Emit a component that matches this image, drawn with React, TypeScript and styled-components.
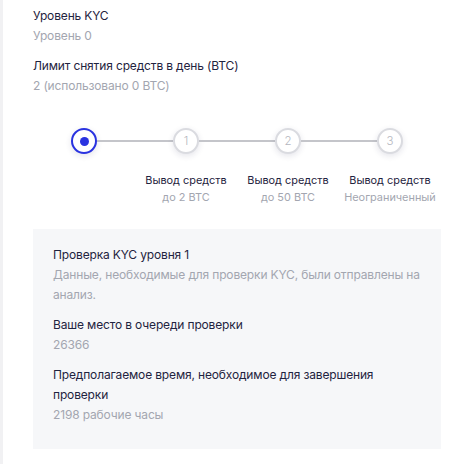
import React from "react";
import styled, { createGlobalStyle } from "styled-components";

const Global = createGlobalStyle`
  html, body { margin: 0; padding: 0; background: #ffffff; }
  body { font-family: Inter, "Open Sans", "Noto Sans", sans-serif; -webkit-font-smoothing: antialiased; }
`;

const Page = styled.div`
  width: 464px;
  height: 464px;
  box-sizing: border-box;
  border-left: 3px solid #f1f1f3;
  padding: 6px 23px 0 30px;
  overflow: hidden;
`;

const Section = styled.div`
  margin-bottom: 10px;
  &:last-child { margin-bottom: 0; }
`;

const Title = styled.div`
  font-size: 12px;
  line-height: 20px;
  letter-spacing: -0.15px;
  color: #1f2340;
`;

const Muted = styled.div`
  font-size: 12px;
  line-height: 20px;
  letter-spacing: -0.15px;
  color: #a3a6b0;
`;

const Stepper = styled.div`
  padding-top: 22px;
  width: 408px;
`;

const Track = styled.div`
  display: flex;
  align-items: center;
  padding: 0 38px;
  height: 26px;
`;

const Circle = styled.div<{ $active?: boolean }>`
  flex: none;
  width: 26px;
  height: 26px;
  box-sizing: border-box;
  border-radius: 50%;
  background: #fff;
  border: ${(p) => (p.$active ? "2.5px solid #2a33e0" : "2px solid #dadbe0")};
  box-shadow: 0 2px 6px rgba(30, 35, 80, 0.12);
  display: flex;
  align-items: center;
  justify-content: center;
  font-size: 11.5px;
  font-weight: 300;
  color: #b4b6be;
`;

const Dot = styled.div`
  width: 9px;
  height: 9px;
  border-radius: 50%;
  background: #2a33e0;
`;

const Line = styled.div`
  flex: 1;
  height: 2px;
  background: #c4c5ca;
`;

const Labels = styled.div`
  display: grid;
  grid-template-columns: repeat(4, 102px);
  margin-top: 18px;
`;

const Label = styled.div`
  text-align: center;
  font-size: 10.9px;
  line-height: 16.5px;
  color: #1f2340;
  white-space: nowrap;
`;

const LabelSub = styled.div`
  color: #a3a6b0;
`;

const Box = styled.div`
  margin-top: 24px;
  width: 408px;
  box-sizing: border-box;
  background: #f6f7f9;
  padding: 16px 12px 24px 20px;
`;

const steps = [
  { n: "1", sub: "до 2 BTC" },
  { n: "2", sub: "до 50 BTC" },
  { n: "3", sub: "Неограниченный" },
];

export default function App() {
  return (
    <>
      <Global />
      <Page>
        <Section>
          <Title>Уровень KYC</Title>
          <Muted>Уровень 0</Muted>
        </Section>
        <Section>
          <Title>Лимит снятия средств в день (BTC)</Title>
          <Muted>2 (использовано 0 BTC)</Muted>
        </Section>
        <Stepper>
          <Track>
            <Circle $active>
              <Dot />
            </Circle>
            {steps.map((s) => (
              <React.Fragment key={s.n}>
                <Line />
                <Circle>{s.n}</Circle>
              </React.Fragment>
            ))}
          </Track>
          <Labels>
            <div />
            {steps.map((s) => (
              <Label key={s.n}>
                Вывод средств
                <LabelSub>{s.sub}</LabelSub>
              </Label>
            ))}
          </Labels>
        </Stepper>
        <Box>
          <Section>
            <Title>Проверка KYC уровня 1</Title>
            <Muted>Данные, необходимые для проверки KYC, были отправлены на анализ.</Muted>
          </Section>
          <Section>
            <Title>Ваше место в очереди проверки</Title>
            <Muted>26366</Muted>
          </Section>
          <Section>
            <Title>Предполагаемое время, необходимое для завершения проверки</Title>
            <Muted>2198 рабочие часы</Muted>
          </Section>
        </Box>
      </Page>
    </>
  );
}
